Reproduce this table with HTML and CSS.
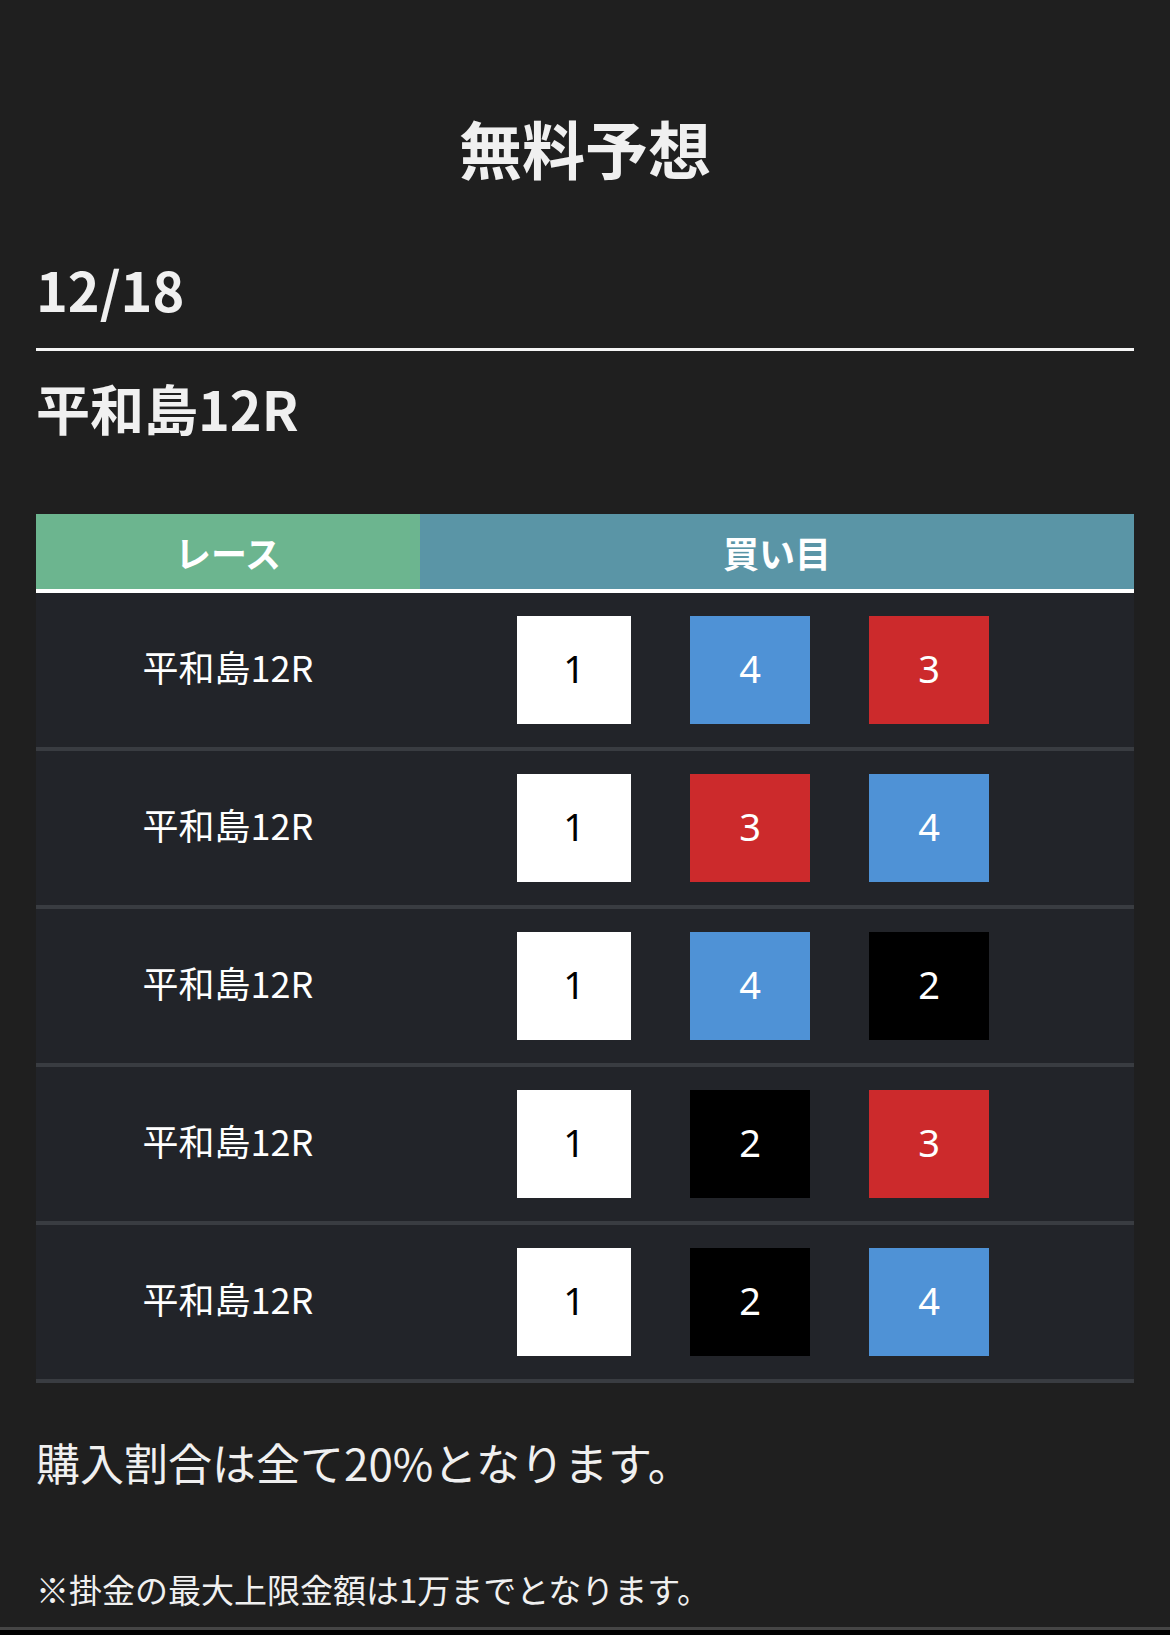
FILE: index.html
```html
<!DOCTYPE html>
<html lang="ja">
<head>
<meta charset="utf-8">
<title>無料予想</title>
<link rel="stylesheet" href="styles.css">
</head>
<body>
<main class="page">
  <h1 class="title">無料予想</h1>
  <h2 class="date">12/18</h2>
  <h3 class="venue">平和島12R</h3>
  <table class="picks">
    <thead>
      <tr><th class="h-race">レース</th><th class="h-buy">買い目</th></tr>
    </thead>
    <tbody>
      <tr>
        <td class="race">平和島12R</td>
        <td class="buy"><div class="boxes"><span class="box b1">1</span><span class="box b4">4</span><span class="box b3">3</span></div></td>
      </tr>
      <tr>
        <td class="race">平和島12R</td>
        <td class="buy"><div class="boxes"><span class="box b1">1</span><span class="box b3">3</span><span class="box b4">4</span></div></td>
      </tr>
      <tr>
        <td class="race">平和島12R</td>
        <td class="buy"><div class="boxes"><span class="box b1">1</span><span class="box b4">4</span><span class="box b2">2</span></div></td>
      </tr>
      <tr>
        <td class="race">平和島12R</td>
        <td class="buy"><div class="boxes"><span class="box b1">1</span><span class="box b2">2</span><span class="box b3">3</span></div></td>
      </tr>
      <tr>
        <td class="race">平和島12R</td>
        <td class="buy"><div class="boxes"><span class="box b1">1</span><span class="box b2">2</span><span class="box b4">4</span></div></td>
      </tr>
    </tbody>
  </table>
  <p class="note">購入割合は全て20%となります。</p>
  <p class="small">※掛金の最大上限金額は1万までとなります。</p>
</main>
<footer class="foot"></footer>
</body>
</html>
```

FILE: styles.css
```css
html, body {
  margin: 0;
  padding: 0;
  background: #1f1f1f;
}
body {
  font-family: "Noto Sans CJK JP", "Noto Sans", sans-serif;
  color: #f0f0f0;
}
.page {
  padding: 109px 36px 0;
}
.title {
  margin: 0;
  font-size: 63px;
  line-height: 76px;
  font-weight: 700;
  text-align: center;
}
.date {
  margin: 71px 0 0;
  padding-bottom: 27px;
  font-size: 54px;
  line-height: 65px;
  font-weight: 700;
  border-bottom: 3px solid #f5f5f5;
}
.venue {
  margin: 24px 0 0;
  font-size: 54px;
  line-height: 65px;
  font-weight: 700;
}
.picks {
  margin-top: 74px;
  width: 100%;
  border-collapse: collapse;
  table-layout: fixed;
}
.picks th {
  height: 75px;
  padding: 0;
  font-size: 36px;
  font-weight: 700;
  color: #ffffff;
  border-bottom: 4px solid #ffffff;
}
.h-race {
  width: 384px;
  background: #6cb58f;
}
.h-buy {
  background: #5a95a6;
}
.picks td {
  background: #222429;
  border-bottom: 4px solid #393c41;
  padding: 0;
  height: 154px;
}
.picks td.race {
  height: 146px;
  padding-bottom: 8px;
  text-align: center;
  font-size: 36px;
  color: #ffffff;
}
.boxes {
  display: flex;
  gap: 59px;
  padding-left: 97px;
}
.box {
  box-sizing: border-box;
  width: 120px;
  height: 108px;
  padding-bottom: 5px;
  display: flex;
  align-items: center;
  justify-content: center;
  font-family: "Noto Sans", "Noto Sans CJK JP", sans-serif;
  font-size: 38px;
  color: #ffffff;
}
.box.b1 {
  width: 114px;
  background: #ffffff;
  color: #000000;
}
.b2 { background: #000000; }
.b3 { background: #cc2a2c; }
.b4 { background: #4f92d6; }
.note {
  margin: 48px 0 0;
  font-size: 44px;
  line-height: 63px;
}
.small {
  margin: 71px 0 0;
  font-size: 33px;
  line-height: 48px;
}
.foot {
  margin-top: 14px;
  border-top: 3px solid #454545;
  height: 40px;
  background: #000000;
}
```
